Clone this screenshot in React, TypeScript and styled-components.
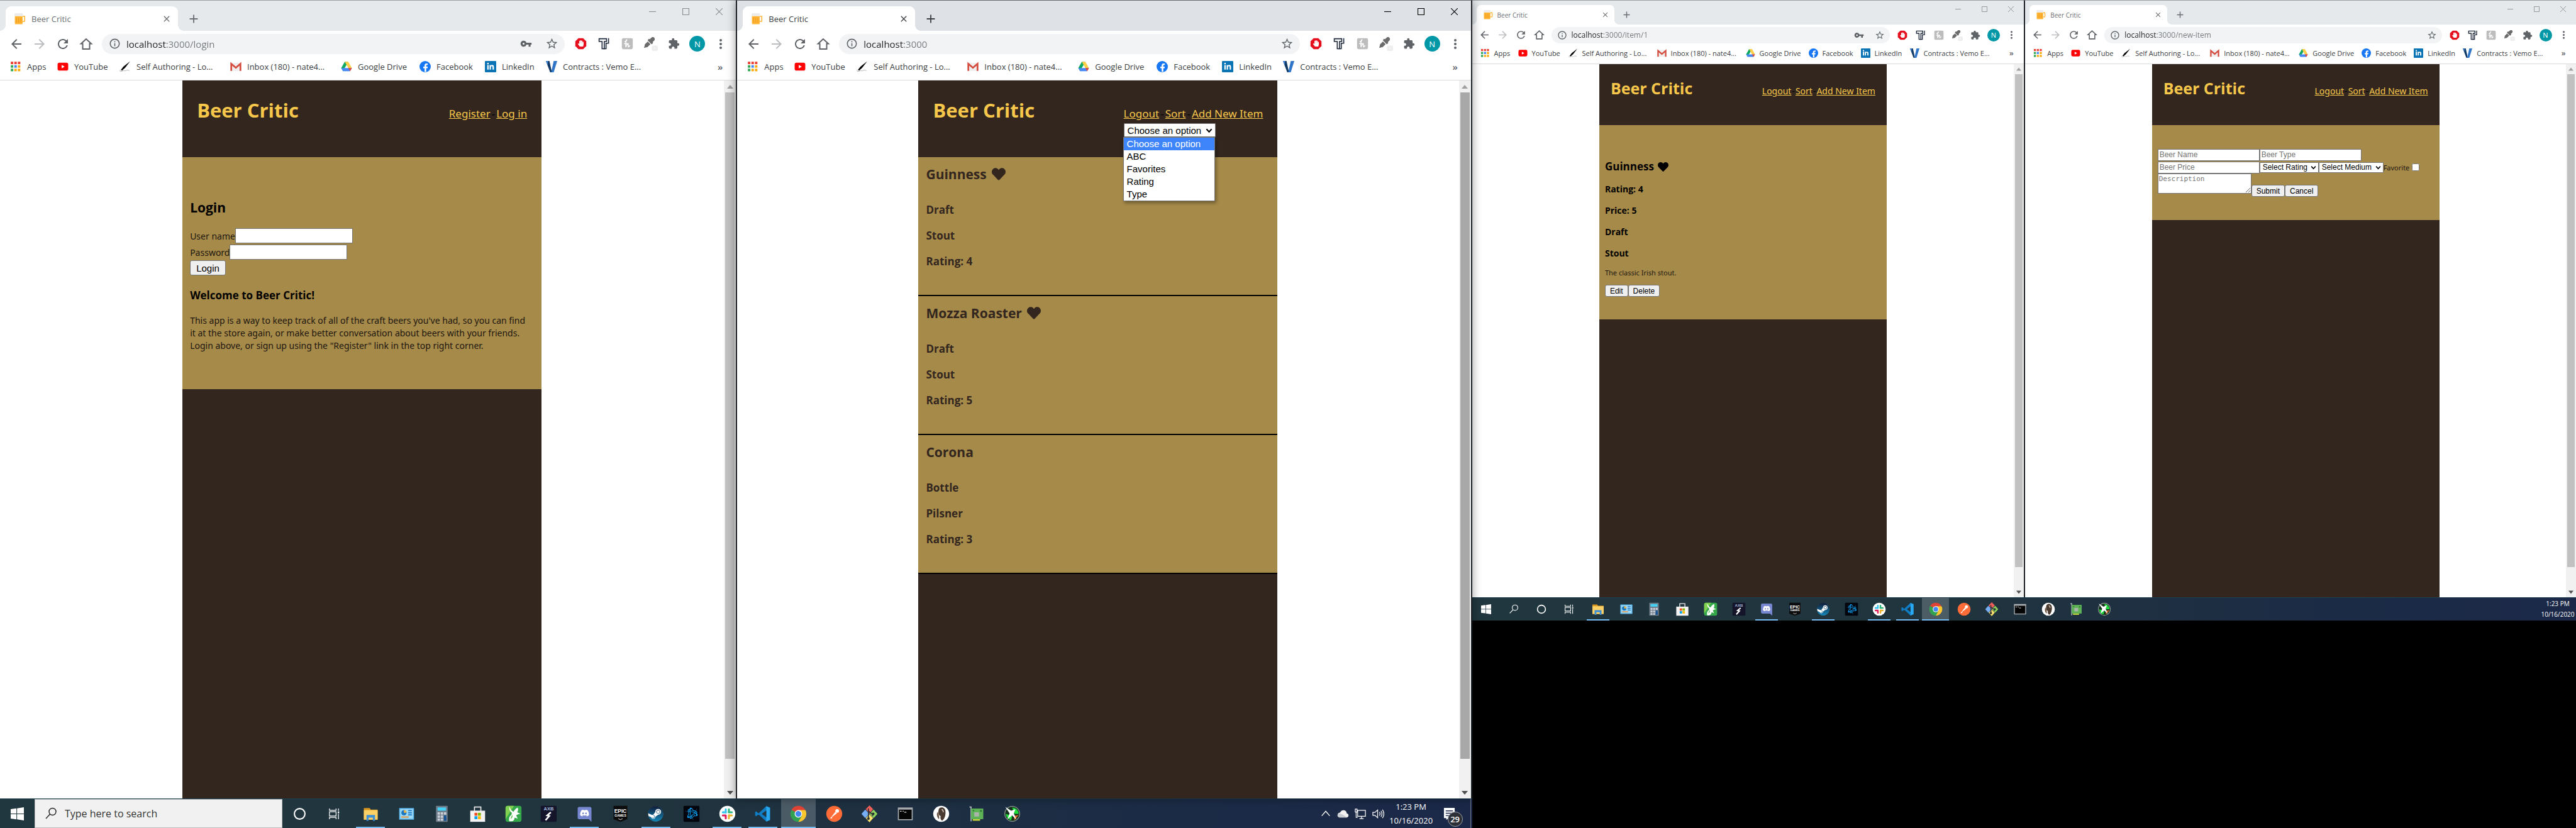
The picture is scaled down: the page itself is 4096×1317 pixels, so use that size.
import React from 'react';
import styled, { createGlobalStyle, css, ThemeProvider } from 'styled-components';
import {
  MdArrowBack, MdArrowForward, MdRefresh, MdInfoOutline, MdVpnKey, MdStarBorder,
  MdExtension, MdMoreVert, MdClose, MdAdd,
} from 'react-icons/md';
import { FaHeart, FaHandPaper, FaEyeDropper, FaDiscord, FaSteam, FaBattleNet, FaFacebookF, FaLinkedinIn } from 'react-icons/fa';

/* ---------- tokens ---------- */

const large = {
  k: 8 / 7, strip: 49, toolbar: 41, marks: 38, host: 63, apps: 1077,
  head: 122, headTop: 26, side: 23, pad: 12, list: 20, linkGap: 2,
  tab: 13, url: 15, mark: 13, h1: 31, h1Line: 42, link: 17, linkLine: 24,
  name: 21, nameLine: 28, sub: 17, subLine: 24, body: 14, bodyLine: 20,
  ui: 15, clock: 13, clockLine: 22,
};

const small = {
  k: 32 / 35, strip: 39, toolbar: 33, marks: 30, host: 50, apps: 850,
  head: 97, headTop: 21, side: 18, pad: 9, list: 16, linkGap: 1,
  tab: 10, url: 12, mark: 11, h1: 25, h1Line: 34, link: 14, linkLine: 20,
  name: 17, nameLine: 22, sub: 14, subLine: 20, body: 11, bodyLine: 18,
  ui: 12, clock: 10, clockLine: 17,
};

type Th = { theme: any };
const u = (n: number) => ({ theme }: Th) => `${Math.round(n * theme.k)}px`;
const t = (key: keyof typeof large) => ({ theme }: Th) => `${theme[key]}px`;

const gold = '#f6c74b';
const bark = '#32261f';
const ale = '#a68a49';
const sans = "'Open Sans', 'Noto Sans', sans-serif";
const prose = "'Noto Sans', 'Open Sans', sans-serif";
const arial = "'Liberation Sans', Arial, sans-serif";

const GlobalStyle = createGlobalStyle`
  *, *::before, *::after { box-sizing: border-box; }
  body { margin: 0; background: #000; font-family: ${sans}; }
  h1, h2, h3, p, ul { margin: 0; padding: 0; }
  button, input, select, textarea { margin: 0; font-family: ${arial}; }
  svg { display: block; flex: none; }
`;

/* ---------- desktop ---------- */

const Wall = styled.div`
  display: grid;
  grid-template-columns: 4fr 3fr;
  min-height: 100vh;
  align-items: start;
  background: #000;
  overflow: hidden;
`;

const Desktop = styled.div<{ $full?: boolean }>`
  display: flex;
  flex-direction: column;
  min-width: 0;
  ${(p) => (p.$full ? 'height: 100vh;' : 'aspect-ratio: 16 / 9;')}
`;

const Windows = styled.div`
  flex: 1;
  min-height: 0;
  display: grid;
  grid-template-columns: 1fr 1fr;
`;

const Frame = styled.section<{ $active?: boolean; $edge?: boolean }>`
  position: relative;
  display: flex;
  flex-direction: column;
  min-width: 0;
  min-height: 0;
  background: #fff;
  border-top: 1px solid ${(p) => (p.$active ? '#66696d' : '#9a9da1')};
  ${(p) => p.$edge && 'border-left: 2px solid #1f2226;'}
  ${(p) => p.$active && css`
    border-right: 2px solid #1f2226;
    box-shadow: 0 0 14px rgba(0, 0, 0, 0.4);
    z-index: 1;
  `}
`;

/* ---------- browser chrome ---------- */

const Strip = styled.header<{ $active?: boolean }>`
  display: flex;
  align-items: flex-end;
  height: ${t('strip')};
  margin-top: -1px;
  padding-left: ${u(8)};
  background: ${(p) => (p.$active ? '#dee1e6' : '#e5e9ec')};
  color: ${(p) => (p.$active ? '#3c4043' : '#6b6e73')};
  border-top: 1px solid transparent;
  background-clip: padding-box;
`;

const Tab = styled.div`
  position: relative;
  display: flex;
  align-items: center;
  gap: ${u(8)};
  width: ${u(240)};
  height: ${u(34)};
  padding: 0 ${u(8)} 0 ${u(12)};
  background: #fff;
  border-radius: ${u(8)} ${u(8)} 0 0;
  font-size: ${t('tab')};
  &::before, &::after {
    content: '';
    position: absolute;
    bottom: 0;
    width: ${u(8)};
    height: ${u(8)};
  }
  &::before {
    right: 100%;
    background: radial-gradient(circle at 0 0, transparent 68%, #fff 70%);
  }
  &::after {
    left: 100%;
    background: radial-gradient(circle at 100% 0, transparent 68%, #fff 70%);
  }
`;

const TabTitle = styled.span`
  flex: 1;
  white-space: nowrap;
`;

const Bare = styled.button<{ $w: number; $h: number; $icon: number; $tint?: string }>`
  display: flex;
  align-items: center;
  justify-content: center;
  flex: none;
  width: ${(p) => u(p.$w)(p)};
  height: ${(p) => u(p.$h)(p)};
  padding: 0;
  border: 0;
  background: none;
  color: ${(p) => p.$tint || 'inherit'};
  > svg { width: ${(p) => u(p.$icon)(p)}; height: ${(p) => u(p.$icon)(p)}; }
`;

const NewTab = styled(Bare)`
  margin: 0 auto ${u(3)} ${u(8)};
`;

const Controls = styled.div<{ $active?: boolean }>`
  display: flex;
  align-self: flex-start;
  color: ${(p) => (p.$active ? '#000' : '#8a8d90')};
`;

const Toolbar = styled.div`
  display: flex;
  align-items: center;
  height: ${t('toolbar')};
  padding: 0 ${u(5)} 0 ${u(6)};
`;

const Omnibox = styled.div`
  flex: 1;
  display: flex;
  align-items: center;
  gap: ${u(8)};
  height: ${u(28)};
  margin: 0 ${u(6)};
  padding: 0 ${u(2)} 0 ${u(10)};
  border-radius: ${u(14)};
  background: #f1f3f4;
  color: #5f6368;
  > svg { width: ${u(17)}; height: ${u(17)}; }
`;

const Address = styled.input`
  flex: 1;
  min-width: 0;
  padding: 0;
  border: 0;
  outline: 0;
  font-family: ${sans};
  font-size: ${t('url')};
  color: transparent;
  background: linear-gradient(90deg, #202124 ${t('host')}, #74787d ${t('host')});
  background-clip: text;
  -webkit-background-clip: text;
`;

const Avatar = styled.span`
  display: flex;
  align-items: center;
  justify-content: center;
  width: ${u(22)};
  height: ${u(22)};
  border-radius: 50%;
  background: #0097a7;
  color: #fff;
  font-family: ${sans};
  font-size: ${t('mark')};
`;

const Bookmarks = styled.nav`
  display: flex;
  align-items: center;
  height: ${t('marks')};
  padding: 0 ${u(8)} ${u(4)} ${u(14)};
  border-bottom: 1px solid #dadce0;
`;

const Bookmark = styled.a<{ $w: number }>`
  display: flex;
  align-items: center;
  gap: ${u(8)};
  width: ${(p) => u(p.$w)(p)};
  flex: none;
  font-size: ${t('mark')};
  color: #3c4043;
  text-decoration: none;
  white-space: nowrap;
  > svg { width: ${u(16)}; height: ${u(16)}; }
`;

const MoreMarks = styled(Bare)`
  margin-left: auto;
  font-family: ${sans};
  font-size: ${t('url')};
  font-weight: 600;
  color: #5f6368;
`;

/* ---------- viewport ---------- */

const Viewport = styled.div`
  flex: 1;
  min-height: 0;
  display: flex;
`;

const Canvas = styled.main`
  flex: 1;
  display: flex;
  justify-content: center;
`;

const Scrollbar = styled.div`
  display: flex;
  flex-direction: column;
  width: ${u(17)};
  background: #f1f1f1;
`;

const Track = styled.div`
  flex: 1;
  display: flex;
  flex-direction: column;
  padding: 0 2px;
`;

const Thumb = styled.div<{ $active?: boolean }>`
  height: 96%;
  background: ${(p) => (p.$active ? '#a8a8a8' : '#c1c1c1')};
`;

/* ---------- beer critic pages ---------- */

const Page = styled.div`
  width: ${u(500)};
  background: ${bark};
  color: #000;
`;

const Masthead = styled.header`
  display: flex;
  align-items: baseline;
  justify-content: space-between;
  height: ${t('head')};
  padding: ${t('headTop')} ${t('side')} 0;
`;

const Brand = styled.h1`
  font-size: ${t('h1')};
  line-height: ${t('h1Line')};
  font-weight: 700;
  color: ${gold};
`;

const Menu = styled.nav`
  display: flex;
  flex-direction: column;
  align-items: flex-start;
`;

const Links = styled.div`
  display: flex;
  gap: ${t('linkGap')};
  font-family: ${prose};
  font-size: ${t('link')};
  line-height: ${t('linkLine')};
  white-space: nowrap;
  a { color: ${gold}; }
`;

const Panel = styled.section<{ $top: number; $bottom: number }>`
  display: flex;
  flex-direction: column;
  align-items: flex-start;
  padding: ${(p) => p.$top}px ${t('pad')} ${(p) => p.$bottom}px;
  background: ${ale};
`;

const Title = styled.h2<{ $after: number }>`
  display: flex;
  align-items: center;
  gap: ${u(6)};
  margin-bottom: ${(p) => p.$after}px;
  font-size: ${t('name')};
  line-height: ${t('nameLine')};
  font-weight: 700;
  svg { width: ${u(21)}; height: ${u(19)}; }
`;

const Fact = styled.h3<{ $after: number }>`
  margin-bottom: ${(p) => p.$after}px;
  font-size: ${t('sub')};
  line-height: ${t('subLine')};
  font-weight: 700;
`;

const Copy = styled.p<{ $after?: number }>`
  max-width: 542px;
  margin-bottom: ${(p) => p.$after || 0}px;
  font-family: ${prose};
  font-size: ${t('body')};
  line-height: ${t('bodyLine')};
  color: #1d1710;
`;

const Form = styled.form`
  display: flex;
  flex-direction: column;
  align-items: flex-start;
`;

const Row = styled.div<{ $h?: number; $top?: boolean }>`
  display: flex;
  align-items: ${(p) => (p.$top ? 'flex-start' : 'center')};
  ${(p) => p.$h && `height: ${p.$h}px;`}
  font-family: ${prose};
  font-size: ${t('body')};
  color: #1d1710;
`;

const field = css`
  border: 1px solid #767676;
  background: #fff;
  font-size: ${t('ui')};
`;

const Field = styled.input`
  ${field}
  width: ${({ theme }) => (theme.k > 1 ? 187 : 162)}px;
  height: ${u(21)};
  padding: 0 2px;
  &::placeholder { color: #757575; }
`;

const Notes = styled.textarea`
  ${field}
  width: 149px;
  height: 32px;
  padding: 1px;
  font-family: 'DejaVu Sans Mono', monospace;
  font-size: ${t('body')};
  &::placeholder { color: #757575; }
`;

const Push = styled.button`
  height: ${u(21)};
  padding: 0 ${u(8)};
  border: 1px solid #767676;
  border-radius: 3px;
  background: #efefef;
  font-size: ${t('ui')};
  line-height: 1;
  color: #000;
`;

const PushRow = styled(Row)`
  margin-top: 18px;
`;

const Check = styled.input`
  width: 12px;
  height: 12px;
  margin: 0 0 0 4px;
`;

const Picker = styled.div<{ $w: number; $after?: number }>`
  display: grid;
  align-items: center;
  justify-items: end;
  width: ${(p) => p.$w}px;
  margin-top: ${(p) => p.$after || 0}px;
  > * { grid-area: 1 / 1; }
  svg { width: ${u(10)}; height: ${u(10)}; margin-right: ${u(4)}; pointer-events: none; }
`;

const Choice = styled.select`
  ${field}
  appearance: none;
  width: 100%;
  height: ${u(19)};
  padding: 0 ${u(4)};
  border-radius: 1px;
  color: #000;
`;

const SortBox = styled.div`
  position: relative;
`;

const Options = styled.ul`
  position: absolute;
  top: 100%;
  left: -1px;
  width: 146px;
  border: 1px solid #767676;
  background: #fff;
  box-shadow: 2px 3px 5px rgba(0, 0, 0, 0.35);
  list-style: none;
  font-family: ${arial};
  font-size: ${t('ui')};
  line-height: ${t('list')};
`;

const Option = styled.li<{ $on?: boolean }>`
  padding-left: 5px;
  background: ${(p) => (p.$on ? '#3e85fc' : 'transparent')};
  color: ${(p) => (p.$on ? '#fff' : '#000')};
`;

const Card = styled.article`
  padding: 13px ${t('pad')} 24px;
  border-bottom: 2px solid #000;
  background: ${ale};
  color: ${bark};
`;

/* ---------- taskbar ---------- */

const Bar = styled.footer`
  display: flex;
  height: ${u(41)};
  flex: none;
  border-top: 1px solid #1c3f52;
  background: linear-gradient(90deg, #21373f 0%, #20343e 45%, #1c2c45 75%, #1b2848 100%);
  color: #fff;
`;

const Cell = styled.button<{ $icon?: number }>`
  display: flex;
  align-items: center;
  justify-content: center;
  width: ${u(48)};
  padding: 0;
  border: 0;
  background: none;
  color: #fff;
  > svg { width: ${(p) => u(p.$icon || 17)(p)}; height: ${(p) => u(p.$icon || 17)(p)}; }
`;

const Search = styled.label`
  display: flex;
  align-items: center;
  gap: 12px;
  width: 394px;
  padding-left: 15px;
  border: 1px solid #bdbdbd;
  background: #f1f1f1;
  color: #222;
  svg { width: 20px; height: 20px; }
`;

const SearchInput = styled.input`
  flex: 1;
  min-width: 0;
  padding: 0;
  border: 0;
  outline: 0;
  background: none;
  font-family: ${sans};
  font-size: 16px;
  &::placeholder { color: #333; opacity: 1; }
`;

const Apps = styled.div`
  display: grid;
  grid-template-columns: repeat(19, 1fr);
  width: ${t('apps')};
  margin-left: 2px;
`;

const AppSlot = styled.button<{ $open?: boolean; $front?: boolean }>`
  display: flex;
  align-items: center;
  justify-content: center;
  margin: 0 ${u(1)};
  padding: 0;
  border: 0;
  background: ${(p) => (p.$front ? 'rgba(255,255,255,0.2)' : 'none')};
  position: relative;
  > svg { width: ${u(24)}; height: ${u(24)}; }
  &::after {
    content: '';
    position: absolute;
    bottom: 0;
    left: ${(p) => (p.$front ? '0' : '8%')};
    right: ${(p) => (p.$front ? '0' : '8%')};
    height: ${u(2)};
    background: ${(p) => (p.$open || p.$front ? '#76b9ed' : 'none')};
  }
`;

const Tray = styled.div`
  display: flex;
  align-items: stretch;
  margin-left: auto;
`;

const TrayIcon = styled(Cell)`
  width: 28px;
`;

const Clock = styled.time<{ $w: number }>`
  display: flex;
  flex-direction: column;
  justify-content: center;
  align-items: center;
  width: ${(p) => p.$w}px;
  font-size: ${t('clock')};
  line-height: ${t('clockLine')};
`;

const Notice = styled(Cell)`
  position: relative;
  width: 46px;
  margin-right: 10px;
`;

const Count = styled.span`
  position: absolute;
  left: 20px;
  top: 20px;
  display: flex;
  align-items: center;
  justify-content: center;
  width: 24px;
  height: 24px;
  border: 1px solid #9aa0a8;
  border-radius: 50%;
  background: #2c2f36;
  font-family: ${sans};
  font-size: 13px;
  font-weight: 600;
`;

const PeekEdge = styled.span`
  width: 3px;
  border-left: 1px solid #6b7486;
`;

/* ---------- drawings ---------- */

const S = ({ v = 32, children }: { v?: number; children: React.ReactNode }) => (
  <svg viewBox={`0 0 ${v} ${v}`} aria-hidden="true">{children}</svg>
);

const Mug = () => (
  <S v={16}>
    <path d="M11.5 4.5h3v7h-3" fill="none" stroke="#ffb636" strokeWidth="1.4" strokeLinejoin="round" />
    <rect x="0.5" y="4" width="11" height="11.5" rx="1" fill="#ffb636" />
    <path d="M3 6v7.5M6 6v7.5M9 6v7.5" stroke="#f29a1f" strokeWidth="1" />
    <path d="M0 1.5q0-1.5 1.5-1.5h9q1.5 0 1.5 1.5v2.5H0z" fill="#ececec" />
  </S>
);

const House = () => (
  <S v={24}><path d="M12 4 3.8 11.6h2.7V20h11v-8.4h2.7z" fill="none" stroke="#5f6368" strokeWidth="2" /></S>
);

const Block = () => (
  <S v={24}>
    <path d="M7.3 1h9.4L23 7.3v9.4L16.7 23H7.3L1 16.7V7.3z" fill="#e60f1e" />
    <FaHandPaper x="5.5" y="5" size={13} color="#fff" />
  </S>
);

const Tee = () => (
  <S v={24}>
    <path d="M2 2h15v5.5h-4.5V22H8V7.500H2z" fill="#fff" stroke="#1f2a3c" strokeWidth="2" />
    <path d="M21 1v10h-5v11h-5" fill="none" stroke="#1f2a3c" strokeWidth="2" />
  </S>
);

const Honey = () => (
  <S v={24}>
    <rect x="1" y="1" width="22" height="22" rx="3" fill="#bdbdbd" />
    <path d="M7 8c3-1 5-4 3.500-4S8.500 12 9 19c1-5 5-8 5-4s-1 5 3 1M6 12h8" fill="none" stroke="#fff" strokeWidth="1.8" strokeLinecap="round" />
  </S>
);

const Dropper = () => (
  <S v={24}>
    <FaEyeDropper x="1" y="1" size={18} color="#6b6b6b" />
    <rect x="14" y="15" width="10" height="9" rx="2" fill="#eee" />
    <rect x="18" y="19" width="2" height="1" fill="#fff" />
  </S>
);

const Chevron = () => (
  <S v={12}><path d="M1.500 3.500 6 8.500l4.500-5" fill="none" stroke="#000" strokeWidth="2.200" /></S>
);

const GridDots = () => (
  <S v={16}>
    {['#ea4335', '#ea4335', '#ea4335', '#34a853', '#4285f4', '#fbab0c', '#34a853', '#fbab0c', '#fbab0c'].map((c, i) => (
      <rect key={i} x={1 + (i % 3) * 5} y={1 + Math.floor(i / 3) * 5} width="3.500" height="3.500" fill={c} />
    ))}
  </S>
);

const Tube = () => (
  <S v={16}><rect y="2.500" x="0.500" width="15" height="11" rx="2.500" fill="#f00" /><path d="M6.200 5.500v5L10.500 8z" fill="#fff" /></S>
);

const Quill = () => (
  <S v={16}>
    <path d="M15 .5 5.500 8 2 12.500l1.500 1L8 9.500z" fill="#000" />
    <path d="M1 12.500c-1 2 1 3 3 1.500s3 1 5-.5 3-.5 5 0" fill="none" stroke="#bbb" strokeWidth=".9" />
  </S>
);

const Mail = () => (
  <S v={16}>
    <rect x="1" y="2.500" width="14" height="11.500" fill="#eee" />
    <path d="M1.500 14V4L8 9.500 14.500 4v10" fill="none" stroke="#d54b3d" strokeWidth="2.400" />
  </S>
);

const Drive = () => (
  <S v={16}>
    <path d="M5.500 1h5L8 5.500 3 14 .5 10z" fill="#11a861" />
    <path d="M5.500 1h5l5 9h-5z" fill="#ffcf48" />
    <path d="M3 10h12.500L13 14.500H3L.5 10z" fill="#4688f4" />
    <path d="M15.500 10 13 14.500 10.500 10z" fill="#ea4335" />
  </S>
);

const Face = () => (
  <S v={16}><circle cx="8" cy="8" r="8" fill="#1877f2" /><FaFacebookF x="2.5" y="3.5" size={12} color="#fff" /></S>
);

const Linked = () => (
  <S v={16}><rect width="16" height="16" rx="1" fill="#0a74b5" /><FaLinkedinIn x="2.500" y="2.500" size={11} color="#fff" /></S>
);

const Vee = () => (
  <S v={16}>
    <path d="M0 0h5l3.500 16H6z" fill="#123a66" />
    <path d="M0 0h3l-.5 6z" fill="#3b82d6" />
    <path d="M11 0h5l-5 16H7.500z" fill="#2f75c8" />
  </S>
);

const Flag = () => (
  <S v={18}><path d="M0 2.600 7.800 1.500v7H0zM8.700 1.400 18 0v8.500H8.700zM0 9.400h7.800v7L0 15.400zM8.700 9.400H18V18l-9.300-1.400z" fill="#fff" /></S>
);

const Lens = () => (
  <S v={20}><circle cx="12.500" cy="7" r="5.500" fill="none" stroke="currentColor" strokeWidth="1.400" /><path d="M8.500 11 2 18" stroke="currentColor" strokeWidth="1.400" /></S>
);

const Ring = () => (
  <S v={20}><circle cx="10" cy="10" r="8" fill="none" stroke="#fff" strokeWidth="2" /></S>
);

const TaskView = () => (
  <S v={20}>
    <path d="M2 1v3h11V1M2 19v-3h11v3M2 6.500h11v7H2zM17 1v4M17 10v9" fill="none" stroke="#fff" strokeWidth="1.300" />
    <rect x="15.800" y="6" width="2.400" height="3" fill="#fff" />
  </S>
);

const Folder = () => (
  <S>
    <path d="M3 5h11l2 3h13v19H3z" fill="#d9941d" />
    <path d="M3 9h26v18H3z" fill="#fbd067" />
    <path d="M8 29V18h16v11h-4v-6h-8v6z" fill="#3d8fd6" />
  </S>
);
const PanelIcon = () => (
  <S>
    <rect x="2" y="5" width="28" height="22" rx="1" fill="#5db7ec" />
    <rect x="4" y="7" width="24" height="18" fill="#9bd9f7" />
    <circle cx="11" cy="14" r="5" fill="#1b76c4" /><path d="M11 14V9a5 5 0 0 1 5 5z" fill="#f4b73f" />
    <path d="M19 10h7M19 14h7M19 18h7" stroke="#1b76c4" strokeWidth="2" /><path d="M6 22h14" stroke="#f08a24" strokeWidth="2" />
  </S>
);
const Calc = () => (
  <S>
    <rect x="5" y="1" width="22" height="30" rx="1" fill="#6e7b88" />
    <rect x="8" y="4" width="16" height="6" fill="#45d3f5" />
    {[0, 1, 2, 3, 4, 5].map((i) => <rect key={i} x={8 + (i % 3) * 6} y={13 + Math.floor(i / 3) * 6} width="4.500" height="4.500" fill="#c9d0d8" />)}
    <path d="M8 25h4.500v4H8zM14 25h4.500v4H14z" fill="#c9d0d8" /><path d="M20 19h4.500v10H20z" fill="#134f94" />
  </S>
);
const Shop = () => (
  <S>
    <path d="M10 11V3h12v8" fill="none" stroke="#e8e8e8" strokeWidth="2" />
    <path d="M2 10h28v21H2z" fill="#f3f3f3" />
    <path d="M10 14h5.500v5.500H10z" fill="#f25022" /><path d="M16.500 14H22v5.500h-5.500z" fill="#7fba00" />
    <path d="M10 20.500h5.500V26H10z" fill="#00a4ef" /><path d="M16.500 20.500H22V26h-5.500z" fill="#ffb900" />
  </S>
);
const Deer = () => (
  <S>
    <rect x="1" y="1" width="30" height="30" rx="4" fill="#35a84a" /><path d="M1 5q0-4 4-4h12L1 26z" fill="#7fd14f" />
    <path d="M8 2c0 6 1 9 5 12l-1 4c-4 2-5 7-4 12h5c4-1 5-4 5-7l6 2-3-6c2-2 5-3 8-3l-6-3c2-3 2-6 1-9-3 1-6 4-8 8-4-2-6-5-8-10z" fill="#fff" />
    <path d="M14 17c-1 3-3 4-3 9l3-4z" fill="#5fc04e" />
  </S>
);
const Axb = () => (
  <S>
    <rect x="1" y="1" width="30" height="30" rx="2" fill="#14152b" />
    <text x="16" y="10" textAnchor="middle" fontSize="9" fontWeight="700" fontFamily="Liberation Sans" fill="#9fb4d8">AXB</text>
    <path d="m20 13-7 6 4 1-7 8" fill="none" stroke="#fff" strokeWidth="3" />
  </S>
);
const Disc = () => (
  <S>
    <path d="M6 3h20q3 0 3 3v25l-5-5H6q-3 0-3-3V6q0-3 3-3z" fill="#7687cf" /><FaDiscord x="7" y="5.5" size={18} color="#fff" />
  </S>
);
const Epic = () => (
  <S>
    <path d="M3 1h26v25l-13 5-13-5z" fill="#0c0c0c" />
    <text x="16" y="14" textAnchor="middle" fontSize="10" fontWeight="700" fontFamily="Liberation Sans" fill="#fff">EPIC</text>
    <text x="16" y="21" textAnchor="middle" fontSize="6" fontWeight="700" fontFamily="Liberation Sans" fill="#fff">GAMES</text>
    <path d="m12 25 4 2 4-2" fill="none" stroke="#fff" />
  </S>
);
const Steam = () => (
  <S>
    <defs><linearGradient id="steam" x2="0" y2="1"><stop stopColor="#111d3a" /><stop offset="1" stopColor="#1387b8" /></linearGradient></defs>
    <circle cx="16" cy="16" r="14" fill="#fff" /><FaSteam x="1" y="1" size={30} fill="url(#steam)" />
  </S>
);
const Battle = () => (
  <S><rect x="1" y="1" width="30" height="30" rx="2" fill="#02060c" /><FaBattleNet x="4" y="4" size={24} color="#0d9df0" /></S>
);
const Slack = () => (
  <S>
    <circle cx="16" cy="16" r="15" fill="#fff" />
    <g fill="none" strokeWidth="3.600" strokeLinecap="round">
      <path d="M13 7.500v6M7.500 13h1" stroke="#36c5f0" /><path d="M8 13h5" stroke="#36c5f0" />
      <path d="M24.500 13h-6M19 7.500V13" stroke="#2eb67d" /><path d="M19 24.500v-6M19 19h5.500" stroke="#ecb22e" />
      <path d="M7.500 19h5.500M13 19v5.500" stroke="#e01e5a" />
    </g>
  </S>
);
const Code = () => (
  <S>
    <path d="M23 1.500 8.500 15 4 11.500 2 12.700v6.600L4 20.500 8.500 17 23 30.500l7-3V4.500z" fill="#0f7cc4" />
    <path d="M23 1.500v29l7-3v-23z" fill="#29a8f0" /><path d="M23 9.500v13L14.500 16z" fill="#20343e" />
    <path d="m2 12.700 2-1.200 7 6.500-7-.5z" fill="#0f7cc4" />
  </S>
);
const Chrome = () => (
  <S>
    <path d="M16 16 3 8.500A15 15 0 0 1 29 8.500z" fill="#e04336" />
    <path d="M16 16 3 8.500A15 15 0 0 0 16 31l6.500-11z" fill="#33a152" />
    <path d="M16 9h13.300A15 15 0 0 1 16 31l6.300-11z" fill="#fbc62e" />
    <circle cx="16" cy="16" r="7" fill="#fff" /><circle cx="16" cy="16" r="5.500" fill="#4486f3" />
  </S>
);
const Post = () => (
  <S>
    <circle cx="16" cy="16" r="15" fill="#ff6c37" /><path d="m9 24 9-12 3 3z" fill="#fff" />
    <circle cx="21.500" cy="10.500" r="3.500" fill="#fff" /><path d="m9 24 3-1" stroke="#fff" strokeWidth="2" />
  </S>
);
const Git = () => (
  <S>
    <path d="m16 0 7 7-7 8-7-8z" fill="#f05f5a" /><path d="m8 8 8 8-8 8-7-8z" fill="#77adf5" />
    <path d="m24 8 7 8-7 8-8-8z" fill="#8ed35b" /><path d="m16 17 7 7-7 8-7-8z" fill="#fbe06b" />
    <path d="M14 6v20M14 11l8 6v3" fill="none" stroke="#2b3036" strokeWidth="2" />
    <circle cx="14" cy="25" r="2.500" fill="#2b3036" /><circle cx="23" cy="16" r="2.500" fill="#2b3036" />
  </S>
);
const Term = () => (
  <S>
    <rect x="2" y="4" width="28" height="24" fill="#a9adb0" /><rect x="4" y="8" width="24" height="18" fill="#050505" />
    <path d="M6 11h3M11 11h2M14 13h4" stroke="#ddd" strokeWidth="1.500" />
  </S>
);
const Beaver = () => (
  <S>
    <circle cx="16" cy="16" r="15" fill="#fff" />
    <path d="M13 5c5-3 10 0 11 5 1 7-1 15-6 19-3-2-4-5-3-9-4-1-5-6-4-10 0-2 1-4 2-5z" fill="#4b3a30" />
    <path d="M9 12c-2 5-1 11 3 14 1-4 0-8-3-14z" fill="#6a5443" /><path d="M17 8c2 0 3 2 3 5" stroke="#e8dfd4" fill="none" strokeWidth="1.500" />
  </S>
);
const Board = () => (
  <S>
    <path d="M3 3h3v27" fill="none" stroke="#b8bcc0" strokeWidth="2" /><rect x="6" y="6" width="23" height="20" fill="#5fb357" />
    <path d="M9 26h14v3H9z" fill="#c5d63a" /><rect x="12" y="13" width="9" height="8" fill="#a9b4a9" />
    <path d="M23 9h3v3h-3zM9 9h3v2H9z" fill="#2e7333" />
  </S>
);
const Bolt = () => (
  <S>
    <circle cx="16" cy="16" r="14" fill="#15301c" stroke="#8f9a92" strokeWidth="1.500" />
    <path d="M16 4a12 12 0 0 1 12 12h-8zM4 16a12 12 0 0 0 10 12l2-8z" fill="#1fdc3d" /><path d="M28 18 20 28l-1-8z" fill="#e56a2a" />
    <path d="m3 3 11 7 8-3-3 8 5 12-8-8-9 7 4-11z" fill="#fff" />
  </S>
);

/* ---------- browser window ---------- */

const marks: [string, number, React.FC][] = [
  ['Apps', 66, GridDots], ['YouTube', 87, Tube], ['Self Authoring - Lo...', 154, Quill],
  ['Inbox (180) - nate4...', 154, Mail], ['Google Drive', 109, Drive], ['Facebook', 91, Face],
  ['LinkedIn', 85, Linked], ['Contracts : Vemo E...', 140, Vee],
];

type BrowserProps = { url: string; active?: boolean; edge?: boolean; saved?: boolean; children: React.ReactNode };

const Browser = ({ url, active, edge, saved, children }: BrowserProps) => (
  <Frame $active={active} $edge={edge}>
    <Strip $active={active}>
      <Tab>
        <Bare as="span" $w={16} $h={16} $icon={16}><Mug /></Bare>
        <TabTitle>Beer Critic</TabTitle>
        <Bare $w={16} $h={16} $icon={14} aria-label="Close tab"><MdClose /></Bare>
      </Tab>
      <NewTab $w={28} $h={28} $icon={19} aria-label="New tab"><MdAdd /></NewTab>
      <Controls $active={active}>
        <Bare $w={46} $h={30} $icon={10} aria-label="Minimize"><S v={10}><path d="M0 5h10" stroke="currentColor" /></S></Bare>
        <Bare $w={46} $h={30} $icon={10} aria-label="Maximize"><S v={10}><path d="M.5.5h9v9h-9z" fill="none" stroke="currentColor" /></S></Bare>
        <Bare $w={46} $h={30} $icon={10} aria-label="Close window"><S v={10}><path d="m0 0 10 10M10 0 0 10" stroke="currentColor" /></S></Bare>
      </Controls>
    </Strip>
    <Toolbar>
      <Bare $w={32} $h={28} $icon={21} $tint="#5f6368" aria-label="Back"><MdArrowBack /></Bare>
      <Bare $w={32} $h={28} $icon={21} $tint="#bbbdc0" aria-label="Forward"><MdArrowForward /></Bare>
      <Bare $w={32} $h={28} $icon={21} $tint="#5f6368" aria-label="Reload"><MdRefresh /></Bare>
      <Bare $w={32} $h={28} $icon={21} $tint="#5f6368" aria-label="Home"><House /></Bare>
      <Omnibox>
        <MdInfoOutline />
        <Address aria-label="Address" defaultValue={url} />
        {saved && <Bare $w={24} $h={28} $icon={17} aria-label="Saved password"><MdVpnKey /></Bare>}
        <Bare $w={32} $h={28} $icon={18} aria-label="Bookmark this page"><MdStarBorder /></Bare>
      </Omnibox>
      <Bare $w={32} $h={28} $icon={17} aria-label="Ad blocker"><Block /></Bare>
      <Bare $w={32} $h={28} $icon={17} aria-label="Type tool"><Tee /></Bare>
      <Bare $w={32} $h={28} $icon={17} aria-label="Coupons"><Honey /></Bare>
      <Bare $w={32} $h={28} $icon={20} aria-label="Colour picker"><Dropper /></Bare>
      <Bare $w={32} $h={28} $icon={17} $tint="#5f6368" aria-label="Extensions"><MdExtension /></Bare>
      <Bare $w={32} $h={28} $icon={17} aria-label="Profile"><Avatar>N</Avatar></Bare>
      <Bare $w={32} $h={28} $icon={21} $tint="#5f6368" aria-label="Menu"><MdMoreVert /></Bare>
    </Toolbar>
    <Bookmarks>
      {marks.map(([name, w, Icon]) => (
        <Bookmark key={name} href="#" $w={w}><Icon />{name}</Bookmark>
      ))}
      <MoreMarks $w={28} $h={20} $icon={10}>»</MoreMarks>
    </Bookmarks>
    <Viewport>
      <Canvas>{children}</Canvas>
      <Scrollbar>
        <Bare $w={17} $h={17} $icon={9} $tint="#a0a0a0" aria-label="Scroll up"><S v={10}><path d="M0 8h10L5 2z" fill="currentColor" /></S></Bare>
        <Track><Thumb $active={active} /></Track>
        <Bare $w={17} $h={17} $icon={9} $tint="#505050" aria-label="Scroll down"><S v={10}><path d="M0 2h10L5 8z" fill="currentColor" /></S></Bare>
      </Scrollbar>
    </Viewport>
  </Frame>
);

/* ---------- screens ---------- */

const Site = ({ links, sort, children }: { links: string[]; sort?: boolean; children: React.ReactNode }) => (
  <Page>
    <Masthead>
      <Brand>Beer Critic</Brand>
      <Menu>
        <Links>
          {links.map((l, i) => (
            <React.Fragment key={l}>{i > 0 && <span>-</span>}<a href="#">{l}</a></React.Fragment>
          ))}
        </Links>
        {sort && (
          <SortBox>
            <Picker $w={146} $after={3}>
              <Choice aria-label="Sort beers"><option>Choose an option</option></Choice>
              <Chevron />
            </Picker>
            <Options role="listbox" aria-label="Sort options">
              {['Choose an option', 'ABC', 'Favorites', 'Rating', 'Type'].map((o, i) => (
                <Option key={o} role="option" aria-selected={i === 0} $on={i === 0}>{o}</Option>
              ))}
            </Options>
          </SortBox>
        )}
      </Menu>
    </Masthead>
    {children}
  </Page>
);

const memberLinks = ['Logout', 'Sort', 'Add New Item'];

const Login = () => (
  <Site links={['Register', 'Log in']}>
    <Panel $top={66} $bottom={59}>
      <Title $after={18}>Login</Title>
      <Form>
        <Row $h={26}><label htmlFor="user">User name</label><Field id="user" type="text" /></Row>
        <Row $h={26}><label htmlFor="pass">Password</label><Field id="pass" type="password" /></Row>
        <Row $h={44} $top><Push type="button">Login</Push></Row>
      </Form>
      <Fact $after={18}>Welcome to Beer Critic!</Fact>
      <Copy>
        This app is a way to keep track of all of the craft beers you've had, so you can find it at the store
        again, or make better conversation about beers with your friends. Login above, or sign up using the
        "Register" link in the top right corner.
      </Copy>
    </Panel>
  </Site>
);

const beers = [
  { name: 'Guinness', fav: true, medium: 'Draft', type: 'Stout', rating: 4 },
  { name: 'Mozza Roaster', fav: true, medium: 'Draft', type: 'Stout', rating: 5 },
  { name: 'Corona', fav: false, medium: 'Bottle', type: 'Pilsner', rating: 3 },
];

const List = () => (
  <Site links={memberLinks} sort>
    {beers.map((b) => (
      <Card key={b.name}>
        <Title $after={31}>{b.name}{b.fav && <FaHeart />}</Title>
        <Fact $after={17}>{b.medium}</Fact>
        <Fact $after={17}>{b.type}</Fact>
        <Fact $after={17}>Rating: {b.rating}</Fact>
      </Card>
    ))}
  </Site>
);

const Item = () => (
  <Site links={memberLinks}>
    <Panel $top={55} $bottom={36}>
      <Title $after={15}>Guinness<FaHeart /></Title>
      <Fact $after={14}>Rating: 4</Fact>
      <Fact $after={14}>Price: 5</Fact>
      <Fact $after={14}>Draft</Fact>
      <Fact $after={12}>Stout</Fact>
      <Copy $after={10}>The classic Irish stout.</Copy>
      <Row><Push type="button">Edit</Push><Push type="button">Delete</Push></Row>
    </Panel>
  </Site>
);

const NewItem = () => (
  <Site links={memberLinks}>
    <Panel $top={37} $bottom={37}>
      <Form>
        <Row $h={20}>
          <Field aria-label="Beer name" placeholder="Beer Name" />
          <Field aria-label="Beer type" placeholder="Beer Type" />
        </Row>
        <Row $h={20}>
          <Field aria-label="Beer price" placeholder="Beer Price" />
          <Picker $w={94}><Choice aria-label="Rating"><option>Select Rating</option></Choice><Chevron /></Picker>
          <Picker $w={103}><Choice aria-label="Medium"><option>Select Medium</option></Choice><Chevron /></Picker>
          <label htmlFor="fav">Favorite</label><Check id="fav" type="checkbox" />
        </Row>
        <Row $top>
          <Notes aria-label="Description" placeholder="Description" />
          <PushRow><Push type="button">Submit</Push><Push type="button">Cancel</Push></PushRow>
        </Row>
      </Form>
    </Panel>
  </Site>
);

/* ---------- taskbar ---------- */

const apps: [string, React.FC, string?][] = [
  ['File Explorer', Folder, 'open'], ['Control Panel', PanelIcon], ['Calculator', Calc], ['Store', Shop],
  ['Deer', Deer], ['AXB', Axb], ['Discord', Disc, 'open'], ['Epic Games', Epic], ['Steam', Steam, 'open'],
  ['Battle.net', Battle], ['Slack', Slack, 'open'], ['VS Code', Code, 'open'], ['Chrome', Chrome, 'front'],
  ['Postman', Post], ['Git', Git], ['Terminal', Term], ['DBeaver', Beaver], ['Device', Board], ['Tuner', Bolt],
];

const Taskbar = ({ main }: { main?: boolean }) => (
  <Bar>
    <Cell $icon={18} aria-label="Start"><Flag /></Cell>
    {main
      ? <Search><Lens /><SearchInput aria-label="Search" placeholder="Type here to search" /></Search>
      : <Cell aria-label="Search"><Lens /></Cell>}
    <Cell $icon={18} aria-label="Cortana"><Ring /></Cell>
    <Cell aria-label="Task view"><TaskView /></Cell>
    <Apps>
      {apps.map(([name, Icon, state]) => (
        <AppSlot key={name} aria-label={name} $open={state === 'open'} $front={state === 'front'}><Icon /></AppSlot>
      ))}
    </Apps>
    <Tray>
      {main && (
        <>
          <TrayIcon $icon={16} aria-label="Hidden icons"><S v={20}><path d="m3 14 7-8 7 8" fill="none" stroke="#fff" strokeWidth="1.600" /></S></TrayIcon>
          <TrayIcon $icon={17} aria-label="Cloud"><S v={20}><path d="M4 16q-4-1-3-5 1-3 4-3 2-5 7-4 4 1 4 5 4 1 3 5-1 2-3 2z" fill="#f3f3f3" /><path d="m3 9 6 2 8 5H4q-4-1-3-5z" fill="#c9ccd1" /></S></TrayIcon>
          <TrayIcon $icon={17} aria-label="Network"><S v={20}><path d="M5 4h13v10H5zM11.500 14v4M8 18h7M1 2h3v5H1zM2.500 7v9H5" fill="none" stroke="#fff" strokeWidth="1.300" /></S></TrayIcon>
          <TrayIcon $icon={17} aria-label="Volume"><S v={20}><path d="M1 7.500h3.500L9 3.500v13l-4.500-4H1zM12 7q2 3 0 6M14.500 5q3.500 5 0 10M17 3q5 7 0 14" fill="none" stroke="#fff" strokeWidth="1.300" /></S></TrayIcon>
        </>
      )}
      <Clock $w={main ? 76 : 58}><span>1:23 PM</span><span>10/16/2020</span></Clock>
      {main && (
        <>
          <Notice $icon={17} aria-label="Notifications">
            <S v={20}><path d="M1 0h18v17H9l-4 3v-3H1z" fill="#fff" /><path d="M4 5h12M4 9h12M4 13h8" stroke="#1b2848" strokeWidth="1.500" /></S>
            <Count>29</Count>
          </Notice>
          <PeekEdge />
        </>
      )}
    </Tray>
  </Bar>
);

export default function App() {
  return (
    <Wall>
      <GlobalStyle />
      <ThemeProvider theme={large}>
        <Desktop $full>
          <Windows>
            <Browser url="localhost:3000/login" saved><Login /></Browser>
            <Browser url="localhost:3000" active edge><List /></Browser>
          </Windows>
          <Taskbar main />
        </Desktop>
      </ThemeProvider>
      <ThemeProvider theme={small}>
        <Desktop>
          <Windows>
            <Browser url="localhost:3000/item/1" saved><Item /></Browser>
            <Browser url="localhost:3000/new-item" edge><NewItem /></Browser>
          </Windows>
          <Taskbar />
        </Desktop>
      </ThemeProvider>
    </Wall>
  );
}
